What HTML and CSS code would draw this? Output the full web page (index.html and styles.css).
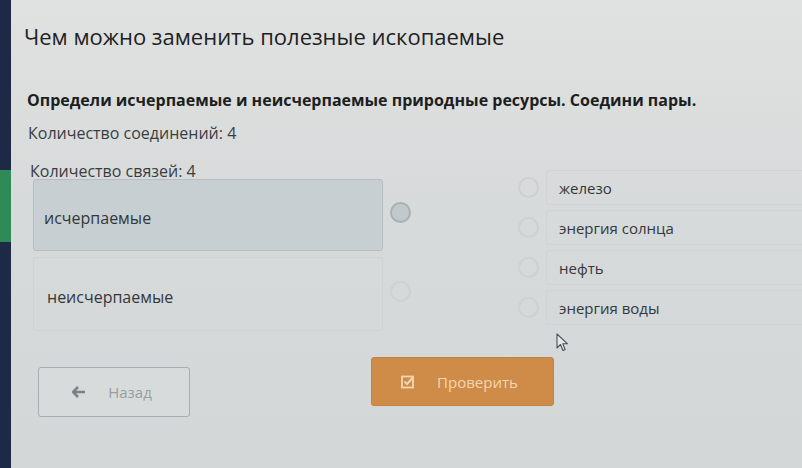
FILE: index.html
```
<!DOCTYPE html>
<html lang="ru">

<head>
    <meta charset="UTF-8">
    <meta name="viewport" content="width=device-width, initial-scale=1.0">
    <title>Чем можно заменить полезные ископаемые</title>
    <link rel="stylesheet" href="styles.css">
</head>

<body>
    <div class="screen">
        <div class="rail">
            <div class="rail-accent"></div>
        </div>

        <main class="content">
            <h1 class="title">Чем можно заменить полезные ископаемые</h1>

            <p class="task">Определи исчерпаемые и неисчерпаемые природные ресурсы. Соедини пары.</p>
            <p class="meta">Количество соединений: 4</p>
            <p class="meta meta-last">Количество связей: 4</p>

            <div class="match">
                <div class="left-col">
                    <div class="left-row">
                        <div class="card selected">исчерпаемые</div>
                        <span class="dot filled"></span>
                    </div>
                    <div class="left-row">
                        <div class="card card-low">неисчерпаемые</div>
                        <span class="dot"></span>
                    </div>
                </div>

                <div class="right-col">
                    <div class="right-row"><span class="dot"></span><div class="option">железо</div></div>
                    <div class="right-row"><span class="dot"></span><div class="option">энергия солнца</div></div>
                    <div class="right-row"><span class="dot"></span><div class="option">нефть</div></div>
                    <div class="right-row"><span class="dot"></span><div class="option">энергия воды</div></div>
                    <!-- mouse pointer -->
                    <svg class="cursor" width="13" height="19" viewBox="0 0 13 19">
                        <path d="M1 1 L1 15 L4.5 11.5 L7 17.5 L9.2 16.6 L6.8 10.8 L11.5 10.8 Z" fill="#e6e8e8" stroke="#4a4f55" stroke-width="1.1" stroke-linejoin="round"/>
                    </svg>
                </div>
            </div>

            <div class="actions">
                <button class="btn btn-back">
                    <svg width="14" height="12" viewBox="0 0 14 12">
                        <path d="M6 1 L1 6 L6 11 M1.5 6 H13" fill="none" stroke="#7d8184" stroke-width="2.6" stroke-linejoin="miter"/>
                    </svg>
                    <span>Назад</span>
                </button>
                <button class="btn btn-check">
                    <svg width="14" height="14" viewBox="0 0 14 14">
                        <rect x="1" y="1.5" width="11" height="11" fill="none" stroke="#f2d6b3" stroke-width="1.8"/>
                        <path d="M3.5 6.5 L6 9 L12.5 2" fill="none" stroke="#f2d6b3" stroke-width="2"/>
                    </svg>
                    <span>Проверить</span>
                </button>
            </div>
        </main>
    </div>
</body>

</html>
```

FILE: styles.css
```
html,
body {
    margin: 0;
    height: 100%;
}

body {
    font-family: "Open Sans", "Noto Sans", sans-serif;
    background-color: #d7dada;
    color: #2a2c2e;
}

.screen {
    display: flex;
    min-height: 100%;
}

.rail {
    width: 11px;
    flex-shrink: 0;
    background-color: #1e2a45;
    padding-top: 170px;
}

.rail-accent {
    height: 72px;
    background-color: #2f8a55;
}

.content {
    flex: 1;
    padding: 19px 0 0 13px;
    background: linear-gradient(180deg, #dfe2e0 0%, #d7dada 45%, #d3d7d8 100%);
}

.title {
    margin: 0;
    font-size: 22px;
    font-weight: 400;
    line-height: 34px;
    color: #1f2123;
}

.task {
    margin: 36px 0 0 3px;
    font-size: 16px;
    font-weight: 700;
    line-height: 22px;
    color: #1c1e20;
}

.meta {
    margin: 11px 0 0 4px;
    font-size: 16px;
    line-height: 22px;
    color: #3a3d40;
}

.meta-last {
    margin-top: 16px;
    margin-left: 6px;
}

.match {
    display: flex;
    margin-top: -10px;
}

.left-col {
    display: flex;
    flex-direction: column;
    gap: 6px;
    margin-left: 9px;
    padding-top: 7px;
}

.left-row {
    display: flex;
    align-items: center;
    gap: 7px;
}

.card {
    box-sizing: border-box;
    width: 350px;
    height: 72px;
    padding: 6px 0 0 10px;
    display: flex;
    align-items: center;
    font-size: 16px;
    color: #34373a;
    border: 1px solid #cfd3d3;
    border-radius: 3px;
}

.card.selected {
    background-color: #c7cfd3;
    border-color: #b6bec2;
}

.card-low {
    height: 74px;
    padding-left: 13px;
}

.card + .dot {
    margin-top: -6px;
}

.dot {
    box-sizing: border-box;
    width: 21px;
    height: 21px;
    flex-shrink: 0;
    border: 2px solid #cdd1d2;
    border-radius: 50%;
}

.dot.filled {
    background-color: #c2c9cc;
    border-color: #a9b1b5;
}

.right-col {
    position: relative;
    display: flex;
    flex-direction: column;
    gap: 5px;
    margin-left: 107px;
    margin-top: -2px;
    flex: 1;
}

.right-row {
    display: flex;
    align-items: center;
    gap: 7px;
}

.option {
    flex: 1;
    box-sizing: border-box;
    height: 35px;
    padding-left: 12px;
    display: flex;
    align-items: center;
    font-size: 15px;
    color: #34373a;
    border: 1px solid #d0d4d4;
    border-right: none;
    border-radius: 3px 0 0 3px;
}

.cursor {
    position: absolute;
    left: 38px;
    top: 163px;
}

.actions {
    display: flex;
    align-items: flex-start;
    margin-top: 26px;
    margin-left: 14px;
}

.btn {
    box-sizing: border-box;
    display: flex;
    align-items: center;
    justify-content: center;
    gap: 22px;
    font-family: "Open Sans", "Noto Sans", sans-serif;
    font-size: 15px;
    border-radius: 3px;
    cursor: pointer;
}

.btn-back {
    width: 152px;
    height: 50px;
    margin-top: 10px;
    padding-right: 10px;
    color: #9a9ea0;
    background-color: #d8dbdb;
    border: 1px solid #a9adaf;
}

.btn-check {
    width: 183px;
    height: 49px;
    margin-left: 181px;
    padding-right: 12px;
    color: #f2d6b3;
    background-color: #cf8c48;
    border: 1px solid #c48240;
}
```
